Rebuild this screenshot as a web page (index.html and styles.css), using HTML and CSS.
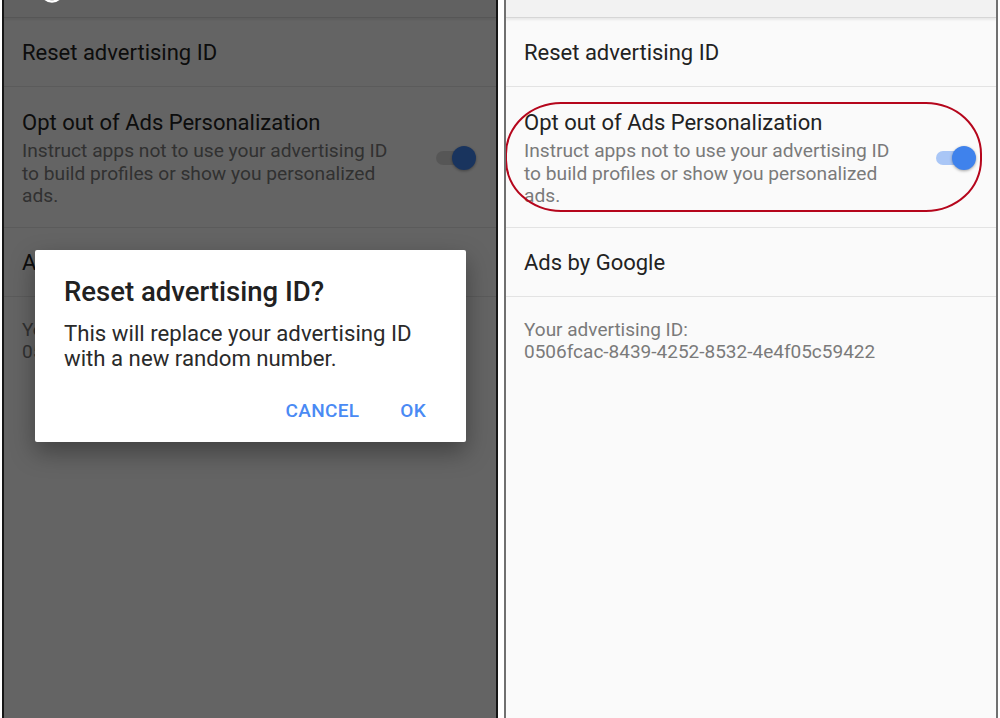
FILE: index.html
```html
<!DOCTYPE html>
<html lang="en">
<head>
<meta charset="utf-8">
<title>Advertising ID settings</title>
<link rel="stylesheet" href="styles.css">
</head>
<body>
<div class="stage">
  <section class="phone phone--dim">
    <header class="appbar">
      <svg class="appbar-icon" width="24" height="24" viewBox="0 0 24 24"><circle cx="12" cy="12" r="10.5" fill="none" stroke="#ffffff" stroke-width="2.5"/></svg>
    </header>
    <div class="list">
      <div class="row"><div class="row-title">Reset advertising ID</div></div>
      <div class="row row--switch">
        <div class="row-text">
          <div class="row-title row-title--tight">Opt out of Ads Personalization</div>
          <div class="row-sub">Instruct apps not to use your advertising ID to build profiles or show you personalized ads.</div>
        </div>
        <div class="switch switch--dim"><div class="switch-track"></div><div class="switch-thumb"></div></div>
      </div>
      <div class="row"><div class="row-title">Ads by Google</div></div>
      <div class="row row--info">
        <div class="row-sub">Your advertising ID:<br>0506fcac-8439-4252-8532-4e4f05c59422</div>
      </div>
    </div>
    <div class="scrim"></div>
    <div class="dialog">
      <div class="dialog-title">Reset advertising ID?</div>
      <div class="dialog-body">This will replace your advertising ID with a new random number.</div>
      <div class="dialog-actions">
        <span class="dialog-btn">CANCEL</span>
        <span class="dialog-btn">OK</span>
      </div>
    </div>
  </section>

  <section class="phone phone--light">
    <header class="appbar"></header>
    <div class="list">
      <div class="row"><div class="row-title">Reset advertising ID</div></div>
      <div class="row row--switch">
        <div class="row-text">
          <div class="row-title row-title--tight">Opt out of Ads Personalization</div>
          <div class="row-sub">Instruct apps not to use your advertising ID to build profiles or show you personalized ads.</div>
        </div>
        <div class="switch"><div class="switch-track"></div><div class="switch-thumb"></div></div>
      </div>
      <div class="row"><div class="row-title">Ads by Google</div></div>
      <div class="row row--info">
        <div class="row-sub">Your advertising ID:<br>0506fcac-8439-4252-8532-4e4f05c59422</div>
      </div>
    </div>
    <div class="highlight"></div>
  </section>
</div>
</body>
</html>
```

FILE: styles.css
```css
html, body {
  margin: 0;
  padding: 0;
  background: #ffffff;
}

body {
  font-family: Roboto, "Noto Sans", "Liberation Sans", sans-serif;
}

.stage {
  display: flex;
  gap: 6px;
  padding-left: 2px;
  height: 718px;
  overflow: hidden;
}

.phone {
  position: relative;
  height: 718px;
  box-sizing: border-box;
  background: #fafafa;
  overflow: hidden;
}

.phone--dim {
  width: 496px;
  border-left: 2px solid #151515;
  border-right: 2px solid #151515;
}

.phone--light {
  width: 494px;
  border-left: 2px solid #707070;
  border-right: 2px solid #707070;
}

.appbar {
  height: 17px;
  background: #f2f2f2;
  border-bottom: 1px solid #d6d6d6;
  box-shadow: 0 2px 2px rgba(0, 0, 0, 0.07);
  display: flex;
  padding-left: 36px;
  overflow: visible;
}

.appbar-icon {
  margin-top: -21px;
  position: relative;
  z-index: 3;
}

.list {
  display: flex;
  flex-direction: column;
}

.row {
  padding: 21px 18px 19px;
  border-bottom: 1px solid #e3e3e3;
}

.row-title {
  font-size: 22px;
  line-height: 28px;
  color: #222222;
}

.row-title--tight {
  line-height: 26px;
  margin-bottom: 4px;
}

.row--switch {
  display: flex;
  align-items: center;
  justify-content: space-between;
  padding: 23px 20px 19px 18px;
}

.row-text {
  width: 376px;
}

.row-sub {
  font-size: 19.2px;
  line-height: 22.5px;
  color: #7a7a7a;
}

.row--info {
  border-bottom: none;
  padding-top: 22px;
}

.row--info .row-sub {
  font-size: 19px;
  line-height: 22px;
}

.switch {
  position: relative;
  width: 40px;
  height: 24px;
  margin-top: -1px;
}

.switch-track {
  position: absolute;
  left: 0;
  top: 5px;
  width: 35px;
  height: 14px;
  border-radius: 7px;
  background: #a9c6f6;
}

.switch--dim .switch-track {
  background: #d8d8d8;
}

.switch-thumb {
  position: absolute;
  right: 0;
  top: 0;
  width: 24px;
  height: 24px;
  border-radius: 50%;
  background: #3f82ec;
  box-shadow: 0 1px 3px rgba(0, 0, 0, 0.35);
}

.scrim {
  position: absolute;
  inset: 0;
  background: rgba(0, 0, 0, 0.6);
  z-index: 2;
}

.dialog {
  position: absolute;
  left: 31px;
  top: 250px;
  width: 431px;
  height: 192px;
  box-sizing: border-box;
  background: #ffffff;
  border-radius: 2px;
  box-shadow: 0 10px 24px rgba(0, 0, 0, 0.35);
  z-index: 4;
  padding: 27px 38px 0 29px;
  display: flex;
  flex-direction: column;
}

.dialog-title {
  font-size: 27.5px;
  line-height: 30px;
  font-weight: 500;
  color: #212121;
}

.dialog-body {
  margin-top: 14px;
  font-size: 22.2px;
  line-height: 25px;
  color: #2a2a2a;
}

.dialog-actions {
  margin-top: 29px;
  padding-right: 2px;
  display: flex;
  justify-content: flex-end;
  gap: 41px;
}

.dialog-btn {
  font-size: 19px;
  line-height: 22px;
  font-weight: 500;
  color: #4a8af4;
  letter-spacing: 0.3px;
}

.highlight {
  position: absolute;
  left: -1px;
  top: 102px;
  width: 477px;
  height: 110px;
  box-sizing: border-box;
  border: 2px solid #b5061c;
  border-radius: 56px / 52px;
  pointer-events: none;
}
```
